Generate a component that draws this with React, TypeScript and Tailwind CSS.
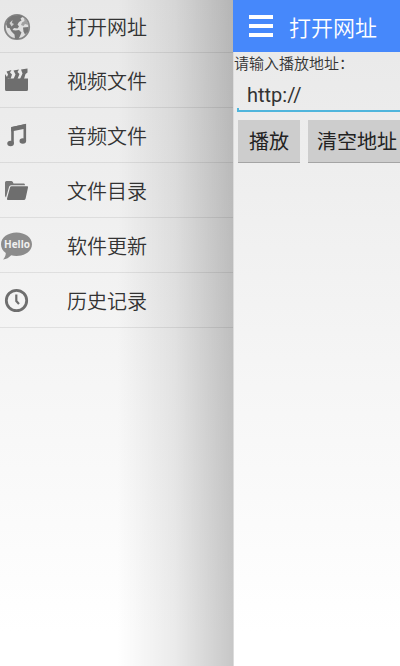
import type { ReactNode } from 'react';

type MenuItem = {
  label: string;
  icon: ReactNode;
};

function GlobeIcon() {
  return (
    <svg viewBox="0 0 28 28" className="h-7 w-7" aria-hidden="true">
      <circle cx="14" cy="14" r="12.2" fill="#dedede" stroke="#868686" strokeWidth="1.8" />
      <path
        d="M3 11 5 6 9 3 16 2 20 3.500 17.500 5.500 18.500 7.500 16 9 14.500 11.500 16 13.500 14.500 15.500 11 15 9.500 17 12.500 17.500 16 17 18.500 19.500 17 23 15.500 26 12 26 11.500 21.500 8.500 18.500 6.500 15 4.500 15Z"
        fill="#777"
      />
      <path d="M6.500 10 9.500 7 9 10 11 11 8.500 13.500Z" fill="#cfcfcf" />
      <path d="M21 4.500 24 8 25.500 12 22 11 20.500 13 18 12 19 9.500 21.500 8Z" fill="#a0a0a0" />
      <path d="M20 14.500 25.500 14 25 18.500 22 21.500 20.500 18.500Z" fill="#777" />
    </svg>
  );
}

function ClapperIcon() {
  return (
    <svg viewBox="0 0 28 28" className="h-7 w-7" aria-hidden="true">
      <path d="M2 7 5 11.500H25V22.500Q25 24 23.500 24H3.500Q2 24 2 22.500Z" fill="#6e6e6e" />
      <g fill="#6e6e6e">
        <path d="M3.500 4.500 8.500 3 7 5.500 9 7.500 7.500 12 3.500 11 5 7.500Z" />
        <path d="M10.500 3.500 16 2.500 14.500 5 16.500 7 14.500 12H10.500L12.500 7.500Z" />
        <path d="M18 2.500 24.500 1.500V5.500L22.500 7 21 12H17L19.500 6.500Z" />
      </g>
    </svg>
  );
}

function MusicIcon() {
  return (
    <svg viewBox="0 0 28 28" className="h-7 w-7" aria-hidden="true">
      <path d="M9.500 21.500V6.200L21.800 3.300V19" fill="none" stroke="#6e6e6e" strokeWidth="2.600" />
      <path d="M8.200 5 23 2V6.500L8.200 9.500Z" fill="#6e6e6e" />
      <ellipse cx="7.600" cy="21.500" rx="3.300" ry="2.800" fill="#6e6e6e" />
      <ellipse cx="19.800" cy="19" rx="3.300" ry="2.800" fill="#6e6e6e" />
    </svg>
  );
}

function FolderIcon() {
  return (
    <svg viewBox="0 0 28 28" className="h-7 w-7" aria-hidden="true">
      <path d="M2 5.500Q2 4 3.500 4H8.500Q10 4 10.500 6.500H21Q22 6.500 22 8.200H8Q6.600 8.200 6.100 9.800L3 20.500 2 19Z" fill="#777" />
      <path d="M8.500 9.300H24.200Q25.300 9.300 25 10.600L22.600 21.500Q22.200 23 20.800 23H4.800Q3.600 23 4 21.600L7 10.500Q7.400 9.300 8.500 9.300Z" fill="#6e6e6e" />
    </svg>
  );
}

function HelloIcon() {
  return (
    <svg viewBox="0 0 32 28" className="h-7 w-8" aria-hidden="true">
      <path
        d="M16.500.5C25 .5 32 5.500 32 12.200S25 24 16.500 24C14.500 24 12.800 23.800 11.200 23.200 9 25.500 6.500 27.200 3 27.500 5 25.500 5.700 23.500 5.800 21 2.800 18.800 1 15.800 1 12.200 1 5.500 8 .5 16.500.5Z"
        fill="#8c8c8c"
      />
      <text x="17" y="16" textAnchor="middle" fill="#f0f0f0" className="font-['Open_Sans',sans-serif] text-[10px] font-bold">
        Hello
      </text>
    </svg>
  );
}

function ClockIcon() {
  return (
    <svg viewBox="0 0 28 28" className="h-7 w-7" aria-hidden="true">
      <circle cx="13.500" cy="13.500" r="10.200" fill="none" stroke="#6e6e6e" strokeWidth="2.800" />
      <path d="M13.300 7.500V14L16 17" fill="none" stroke="#6e6e6e" strokeWidth="2.200" />
    </svg>
  );
}

const menuItems: MenuItem[] = [
  { label: '打开网址', icon: <GlobeIcon /> },
  { label: '视频文件', icon: <ClapperIcon /> },
  { label: '音频文件', icon: <MusicIcon /> },
  { label: '文件目录', icon: <FolderIcon /> },
  { label: '软件更新', icon: <HelloIcon /> },
  { label: '历史记录', icon: <ClockIcon /> },
];

function Drawer() {
  return (
    <aside className="relative w-[58.25%] shrink-0">
      <nav>
        <ul>
          {menuItems.map(({ label, icon }) => (
            <li key={label} className="group border-b border-black/8">
              <button
                type="button"
                className="flex h-[54px] w-full items-center pt-0.5 text-left text-xl font-[350] text-[#333] group-first:h-[52px]"
              >
                <span className="flex w-[67px] pl-[3px] has-[.w-8]:pl-0">{icon}</span>
                {label}
              </button>
            </li>
          ))}
        </ul>
      </nav>
      {/* shade cast by the page lying over the drawer */}
      <div className="pointer-events-none absolute inset-y-0 right-0 w-1/2 bg-linear-to-r from-transparent via-black/8 to-black/22" />
    </aside>
  );
}

function OpenUrlPage() {
  return (
    <main className="flex min-w-0 flex-1 flex-col overflow-hidden">
      <header className="flex h-[52px] items-center bg-[#4688fb] text-white">
        <button type="button" aria-label="菜单" className="ml-4 flex w-6 flex-col gap-[5px]">
          <span className="h-1 bg-white" />
          <span className="h-1 bg-white" />
          <span className="h-1 bg-white" />
        </button>
        <h1 className="ml-4 text-[22px] leading-8 font-[350] whitespace-nowrap">打开网址</h1>
      </header>
      <form className="flex-1 border-l border-[#dcdcdc]" onSubmit={(e) => e.preventDefault()}>
        <label htmlFor="url" className="block text-[15px] leading-[22px] font-[350] whitespace-nowrap text-[#333]">
          请输入播放地址：
        </label>
        <div className="ml-[3px] flex flex-col pt-2">
          <input
            id="url"
            type="text"
            defaultValue="http://"
            className="h-[26px] w-full bg-transparent pl-[10px] font-['Roboto','Noto_Sans_CJK_SC',sans-serif] text-xl text-[#333] outline-none"
          />
          <div className="h-1 border-b-2 border-l-2 border-[#4fb5dc]" />
        </div>
        <div className="mt-2 ml-1 flex gap-2 text-xl whitespace-nowrap text-[#222]">
          <button type="submit" className="h-[43px] shrink-0 border-b border-[#a4a4a4] bg-[#cdcdcd] px-[11px]">
            播放
          </button>
          <button type="reset" className="h-[43px] shrink-0 border-b border-[#a4a4a4] bg-[#cdcdcd] px-[9px]">
            清空地址
          </button>
        </div>
      </form>
    </main>
  );
}

export default function App() {
  return (
    <div className="flex min-h-screen overflow-hidden bg-linear-to-b from-[#e8e8e8] to-white to-95% font-['Noto_Sans_CJK_SC',sans-serif]">
      <Drawer />
      <OpenUrlPage />
    </div>
  );
}
